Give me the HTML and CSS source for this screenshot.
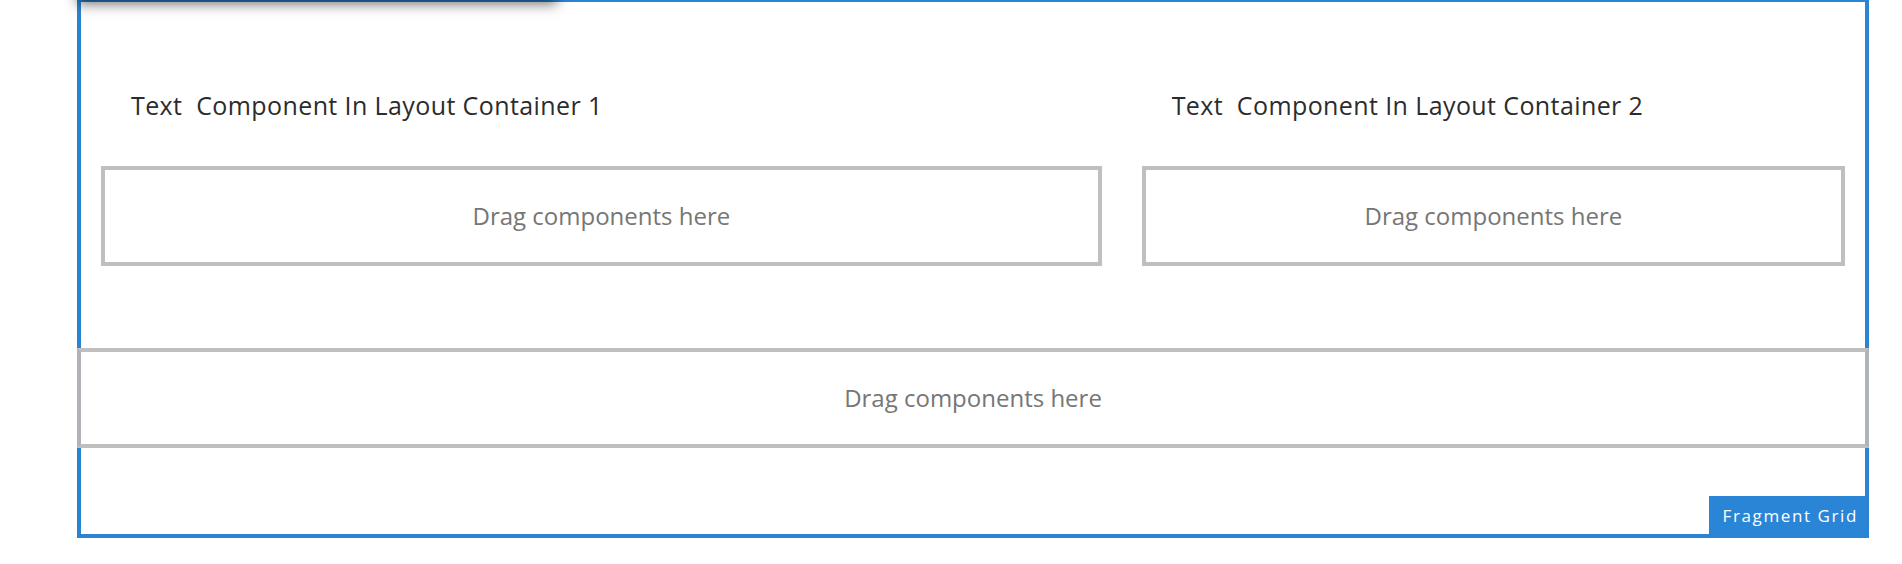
FILE: index.html
```html
<!DOCTYPE html>
<html>
<head>
<meta charset="utf-8">
<link rel="stylesheet" href="styles.css">
</head>
<body>
<div class="page">
  <div class="frame">
    <div class="toolbar"><span class="toolbar-sep"></span></div>
    <div class="grid">
      <div class="col col-wide">
        <div class="title">Text&nbsp; Component In Layout Container 1</div>
        <div class="dropzone">Drag components here</div>
      </div>
      <div class="col col-narrow">
        <div class="title">Text&nbsp; Component In Layout Container 2</div>
        <div class="dropzone">Drag components here</div>
      </div>
    </div>
    <div class="dropzone dropzone-full">Drag components here</div>
    <div class="label">Fragment Grid</div>
  </div>
</div>
</body>
</html>
```

FILE: styles.css
```css
html, body {
  margin: 0;
  padding: 0;
  background: #ffffff;
  overflow: hidden;
}

.page {
  padding-left: 77px;
  width: 1792px;
}

.frame {
  position: relative;
  margin-top: -2px;
  border: 4px solid #2b84d3;
  box-sizing: border-box;
  height: 540px;
}

.toolbar {
  position: absolute;
  left: -4px;
  top: -44px;
  width: 480px;
  height: 42px;
  background: #3b3b3b;
  box-shadow: 0 4px 12px rgba(0, 0, 0, 0.55);
  z-index: 2;
}

.toolbar-sep {
  position: absolute;
  left: 360px;
  top: 0;
  width: 1px;
  height: 100%;
  background: #555;
}

.grid {
  display: grid;
  grid-template-columns: 7fr 5fr;
  padding-top: 88px;
}

.col {
  padding: 0 20px;
  display: flex;
  flex-direction: column;
}

.title {
  font-family: "Open Sans", Lato, sans-serif;
  font-size: 25px;
  line-height: 30px;
  letter-spacing: 0.4px;
  color: #2c2c2c;
  padding-left: 30px;
  margin-bottom: 46px;
  white-space: nowrap;
}

.dropzone {
  height: 100px;
  box-sizing: border-box;
  border: 4px solid #bfbfbf;
  padding-bottom: 2px;
  display: flex;
  align-items: center;
  justify-content: center;
  font-family: "Open Sans", "Noto Sans", sans-serif;
  font-size: 24px;
  color: #767676;
  background: #fff;
}

.dropzone-full {
  margin: 82px -4px 0;
  border-left-color: #aeb3b9;
  border-right-color: #aeb3b9;
}

.label {
  position: absolute;
  right: 0;
  bottom: 0;
  height: 38px;
  padding: 0 7px 0 14px;
  display: flex;
  align-items: center;
  background: #2a85d6;
  color: #ffffff;
  font-family: "Open Sans", "Noto Sans", sans-serif;
  font-size: 17px;
  letter-spacing: 1.6px;
}
```
